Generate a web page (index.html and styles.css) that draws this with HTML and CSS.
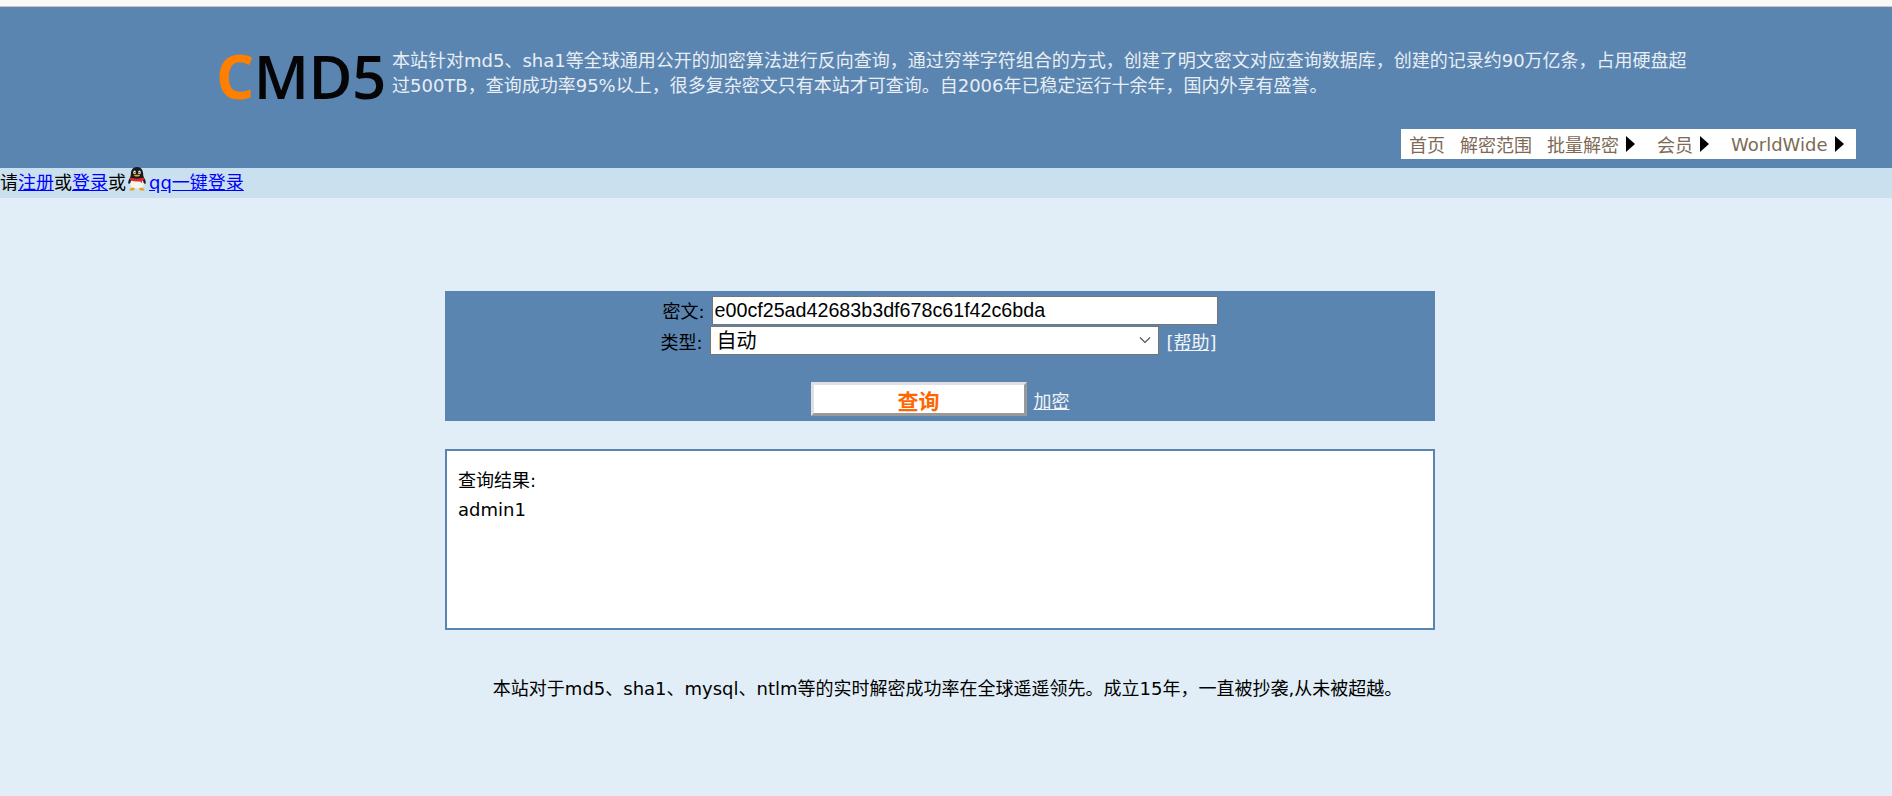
FILE: index.html
```html
<!DOCTYPE html>
<html lang="zh-CN">
<head>
    <meta charset="UTF-8">
    <title>md5在线解密破解</title>
    <link rel="stylesheet" href="styles.css">
</head>
<body>
    <div class="top-line"></div>
    <div class="header">
        <div class="header-main">
            <div class="logo"><span class="logo-c">C</span>MD5</div>
            <p class="intro">本站针对md5、sha1等全球通用公开的加密算法进行反向查询，通过穷举字符组合的方式，创建了明文密文对应查询数据库，创建的记录约90万亿条，占用硬盘超<br>过500TB，查询成功率95%以上，很多复杂密文只有本站才可查询。自2006年已稳定运行十余年，国内外享有盛誉。</p>
        </div>
        <ul class="nav">
            <li><a href="#">首页</a></li>
            <li><a href="#">解密范围</a></li>
            <li class="has-sub"><a href="#">批量解密</a><span class="arrow"></span></li>
            <li class="has-sub"><a href="#">会员</a><span class="arrow"></span></li>
            <li class="has-sub"><a href="#">WorldWide</a><span class="arrow"></span></li>
        </ul>
    </div>
    <div class="login-bar">
        请<a href="#">注册</a>或<a href="#">登录</a>或<svg class="qq" width="22" height="24" viewBox="0 0 22 24">
            <path d="M11 0C6.500 0 4.800 3.500 4.800 7.500C4.800 9 4 10.500 3.200 12C2.200 14 2 16 2.600 16.800C3 17.200 3.600 16.600 4 16L18 16C18.400 16.600 19 17.200 19.400 16.800C20 16 19.800 14 18.800 12C18 10.500 17.200 9 17.200 7.500C17.200 3.500 15.500 0 11 0Z" fill="#1a1a1a"/>
            <path d="M5 13.500C3.800 16.500 4.400 20 7 21.500H15C17.600 20 18.200 16.500 17 13.500Z" fill="#f7f5ef"/>
            <path d="M4.400 10.500C8 12 14 12 17.600 10.500L18.200 12.600C17.600 13.200 16.800 13.600 16 13.800L16.200 16.200L14 14.400C11 14.800 7.600 14.600 5 13.600L3.800 12.600Z" fill="#dd2a30"/>
            <ellipse cx="8.600" cy="5.400" rx="1.300" ry="1.900" fill="#f2f2f2"/>
            <ellipse cx="13.400" cy="5.400" rx="1.300" ry="1.900" fill="#f2f2f2"/>
            <circle cx="8.900" cy="5.600" r="0.700" fill="#111"/>
            <circle cx="13.100" cy="5.600" r="0.700" fill="#111"/>
            <path d="M7.600 8.300C9 7.400 13 7.400 14.400 8.300C13.400 10 8.600 10 7.600 8.300Z" fill="#efa51a"/>
            <path d="M3.500 23.500C3.500 21.500 5.500 20 8.500 21C9.200 22 8.500 23.500 6.500 23.500ZM18.500 23.500C18.500 21.500 16.500 20 13.500 21C12.800 22 13.500 23.500 15.500 23.500Z" fill="#e79f1e"/>
        </svg><a href="#" class="qq-link">qq一键登录</a>
    </div>
    <div class="main">
        <form class="query-form">
            <div class="form-row">
                <label>密文:</label>
                <input type="text" class="hash-input" value="e00cf25ad42683b3df678c61f42c6bda">
            </div>
            <div class="form-row type-row">
                <label>类型:</label>
                <select class="type-select">
                    <option>自动</option>
                </select>
                <a href="#" class="form-link help-link">[帮助]</a>
            </div>
            <div class="form-row submit-row">
                <button type="button" class="query-btn">查询</button>
                <a href="#" class="form-link">加密</a>
            </div>
        </form>
        <div class="result">
            <div class="result-title">查询结果:</div>
            <div class="result-value">admin1</div>
        </div>
        <p class="slogan">本站对于md5、sha1、mysql、ntlm等的实时解密成功率在全球遥遥领先。成立15年，一直被抄袭,从未被超越。</p>
    </div>
</body>
</html>
```

FILE: styles.css
```css
* {
    box-sizing: border-box;
}
html, body {
    height: 100%;
}
body {
    margin: 0;
    background-color: #e1eef7;
    color: #000;
    font-family: "DejaVu Sans", "Noto Sans CJK SC", sans-serif;
    font-size: 18px;
    overflow: hidden;
}
.top-line {
    height: 7px;
    background-color: #f9f9f9;
    border-bottom: 1px solid #c8c8c8;
}
.header {
    height: 161px;
    background-color: #5b85b1;
    display: flex;
    flex-direction: column;
    justify-content: space-between;
    padding: 41px 36px 9px 216px;
}
.header-main {
    display: flex;
    align-items: flex-start;
    gap: 6px;
}
.logo {
    width: 170px;
    height: 56px;
    font-family: "Open Sans", sans-serif;
    font-size: 60px;
    font-weight: 600;
    line-height: 56px;
    letter-spacing: -0.5px;
    color: #050505;
    white-space: nowrap;
}
.logo-c {
    color: #ff7f00;
    font-weight: 700;
}
.intro {
    margin: 0;
    color: #e8eef4;
    line-height: 25px;
    white-space: nowrap;
}
.nav {
    list-style: none;
    margin: 0;
    padding: 0 8px;
    align-self: flex-end;
    width: 455px;
    height: 30px;
    background-color: #fff;
    display: flex;
    align-items: center;
    gap: 15px;
    white-space: nowrap;
}
.nav a {
    color: #7c6a55;
    text-decoration: none;
}
.nav .has-sub {
    display: flex;
    align-items: center;
    gap: 7px;
    margin-right: 7px;
}
.nav .has-sub:last-child {
    margin-right: 0;
}
.arrow {
    width: 0;
    height: 0;
    border-top: 8px solid transparent;
    border-bottom: 8px solid transparent;
    border-left: 9px solid #000;
}
.login-bar {
    height: 30px;
    background-color: #cbe0ef;
    line-height: 30px;
    white-space: nowrap;
}
.login-bar a {
    color: #00f;
}
.qq {
    margin-top: -10px;
    vertical-align: -2px;
}
.qq-link {
    margin-left: 1px;
}
.main {
    width: 990px;
    margin: 93px 0 0 445px;
}
.query-form {
    height: 130px;
    padding-top: 4px;
    background-color: #5b85b1;
    text-align: center;
}
.form-row {
    height: 30px;
    display: flex;
    justify-content: center;
    align-items: center;
    gap: 7px;
}
.form-row label {
    color: #000;
}
.type-row label, .form-link {
    padding-top: 2px;
}
.hash-input {
    width: 506px;
    height: 29px;
    padding: 0 2px;
    border: 1px solid #767676;
    background-color: #fff;
    color: #000;
    font-family: "Liberation Sans", "Noto Sans CJK SC", sans-serif;
    font-size: 19.7px;
}
.type-select {
    width: 449px;
    height: 29px;
    padding: 2px 0 0 6px;
    border: 1px solid #767676;
    border-radius: 0;
    appearance: none;
    background: #fff url("data:image/svg+xml,%3Csvg xmlns='http://www.w3.org/2000/svg' width='12' height='8'%3E%3Cpath d='M1 1.500L6 6.500L11 1.500' fill='none' stroke='%23555' stroke-width='1.200'/%3E%3C/svg%3E") no-repeat right 7px center;
    color: #000;
    font-family: "DejaVu Sans", "Noto Sans CJK SC", sans-serif;
    font-size: 20px;
}
.form-link {
    color: #f0f4f8;
}
.help-link {
    margin: 0 3px 0 1px;
}
.submit-row {
    height: 34px;
    margin-top: 27px;
}
.query-btn {
    width: 216px;
    height: 34px;
    padding: 0;
    border: 3px solid;
    border-color: #e0e0e0 #999 #999 #e0e0e0;
    background-color: #fff;
    color: #ff6600;
    font-family: "DejaVu Sans", "Noto Sans CJK SC", sans-serif;
    font-size: 21px;
    font-weight: bold;
}
.result {
    height: 181px;
    margin-top: 28px;
    padding: 15px 11px;
    border: 2px solid #5b85b1;
    background-color: #fff;
    line-height: 29px;
}
.slogan {
    margin: 46px 0 0;
    padding-left: 15px;
    text-align: center;
    line-height: 26px;
}
```
